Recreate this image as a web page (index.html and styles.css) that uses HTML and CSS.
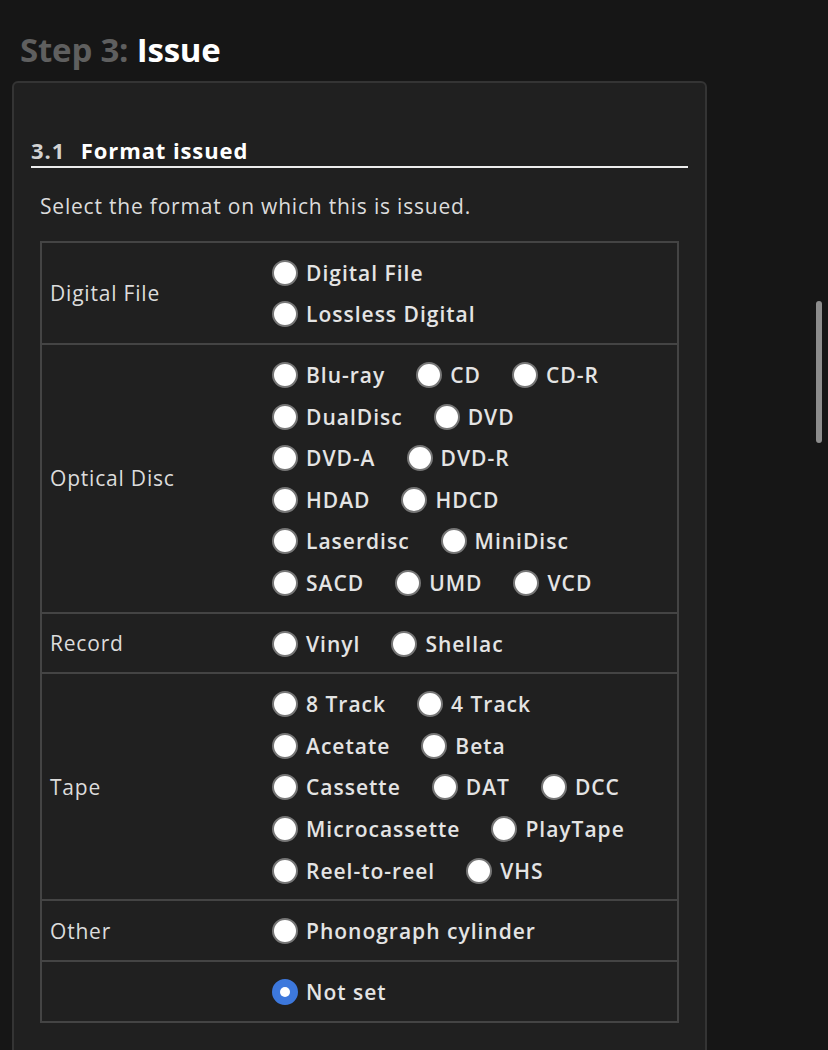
FILE: index.html
```html
<!DOCTYPE html>
<html lang="en">
<head>
<meta charset="utf-8">
<title>Step 3: Issue</title>
<link rel="stylesheet" href="styles.css">
</head>
<body>
<div class="page">
  <h1 class="step-title"><span class="step-num">Step 3:</span> Issue</h1>
  <div class="panel">
    <h2 class="section-title"><span class="section-num">3.1</span> Format issued</h2>
    <p class="hint">Select the format on which this is issued.</p>
    <div class="format-table">
      <div class="row">
        <div class="label">Digital File</div>
        <div class="options">
          <div class="line"><label class="opt"><span class="radio"></span>Digital File</label></div>
          <div class="line"><label class="opt"><span class="radio"></span>Lossless Digital</label></div>
        </div>
      </div>
      <div class="row">
        <div class="label">Optical Disc</div>
        <div class="options">
          <div class="line"><label class="opt"><span class="radio"></span>Blu-ray</label><label class="opt"><span class="radio"></span>CD</label><label class="opt"><span class="radio"></span>CD-R</label></div>
          <div class="line"><label class="opt"><span class="radio"></span>DualDisc</label><label class="opt"><span class="radio"></span>DVD</label></div>
          <div class="line"><label class="opt"><span class="radio"></span>DVD-A</label><label class="opt"><span class="radio"></span>DVD-R</label></div>
          <div class="line"><label class="opt"><span class="radio"></span>HDAD</label><label class="opt"><span class="radio"></span>HDCD</label></div>
          <div class="line"><label class="opt"><span class="radio"></span>Laserdisc</label><label class="opt"><span class="radio"></span>MiniDisc</label></div>
          <div class="line"><label class="opt"><span class="radio"></span>SACD</label><label class="opt"><span class="radio"></span>UMD</label><label class="opt"><span class="radio"></span>VCD</label></div>
        </div>
      </div>
      <div class="row">
        <div class="label">Record</div>
        <div class="options">
          <div class="line"><label class="opt"><span class="radio"></span>Vinyl</label><label class="opt"><span class="radio"></span>Shellac</label></div>
        </div>
      </div>
      <div class="row">
        <div class="label">Tape</div>
        <div class="options">
          <div class="line"><label class="opt"><span class="radio"></span>8 Track</label><label class="opt"><span class="radio"></span>4 Track</label></div>
          <div class="line"><label class="opt"><span class="radio"></span>Acetate</label><label class="opt"><span class="radio"></span>Beta</label></div>
          <div class="line"><label class="opt"><span class="radio"></span>Cassette</label><label class="opt"><span class="radio"></span>DAT</label><label class="opt"><span class="radio"></span>DCC</label></div>
          <div class="line"><label class="opt"><span class="radio"></span>Microcassette</label><label class="opt"><span class="radio"></span>PlayTape</label></div>
          <div class="line"><label class="opt"><span class="radio"></span>Reel-to-reel</label><label class="opt"><span class="radio"></span>VHS</label></div>
        </div>
      </div>
      <div class="row">
        <div class="label">Other</div>
        <div class="options">
          <div class="line"><label class="opt"><span class="radio"></span>Phonograph cylinder</label></div>
        </div>
      </div>
      <div class="row">
        <div class="label"></div>
        <div class="options">
          <div class="line"><label class="opt"><span class="radio checked"></span>Not set</label></div>
        </div>
      </div>
    </div>
  </div>
</div>
<div class="scrollbar"></div>
</body>
</html>
```
FILE: styles.css
```css
html, body {
  margin: 0;
  padding: 0;
  background: #161616;
  height: 100%;
  overflow: hidden;
}
body {
  font-family: "Open Sans", "Noto Sans", sans-serif;
  color: #e6e6e6;
}
.page {
  padding: 0 0 0 12px;
}
.step-title {
  margin: 0;
  padding: 30px 0 11px 8px;
  line-height: 40px;
  font-size: 33px;
  font-weight: 700;
  color: #ffffff;
  letter-spacing: -0.2px;
}
.step-title .step-num {
  color: #5f5f5f;
}
.panel {
  width: 695px;
  min-height: 1100px;
  box-sizing: border-box;
  background: #202020;
  border: 2px solid #343434;
  border-radius: 6px;
  padding: 54px 17px 0 17px;
}
.section-title {
  margin: 0;
  font-size: 22px;
  line-height: 27px;
  font-weight: 700;
  color: #ffffff;
  letter-spacing: 0.9px;
  padding-bottom: 2px;
  border-bottom: 2px solid #ececec;
}
.section-num {
  color: #d2d2d2;
  margin-right: 9px;
}
.hint {
  margin: 26px 0 0 9px;
  font-size: 21px;
  line-height: 24px;
  letter-spacing: 0.8px;
  color: #dcdcdc;
}
.format-table {
  margin: 23px 9px 0 9px;
  border: 2px solid #444444;
}
.row {
  display: flex;
  align-items: center;
  border-top: 2px solid #444444;
}
.row:first-child {
  border-top: none;
}
.label {
  width: 222px;
  padding-left: 8px;
  font-size: 21px;
  letter-spacing: 0.8px;
  color: #dcdcdc;
  flex: none;
}
.options {
  padding: 9px 0 8px 0;
  flex: 1;
}
.line {
  display: flex;
  align-items: center;
  height: 41.6px;
  gap: 31px;
}
.opt {
  display: flex;
  align-items: center;
  gap: 8px;
  font-size: 21px;
  font-weight: 600;
  letter-spacing: 1px;
  color: #e4e4e4;
}
.radio {
  width: 26px;
  height: 26px;
  box-sizing: border-box;
  border-radius: 50%;
  background: #ffffff;
  border: 2px solid #767676;
  flex: none;
}
.radio.checked {
  background: #3d78dc;
  border: 2px solid #3d78dc;
  display: flex;
  align-items: center;
  justify-content: center;
}
.radio.checked::after {
  content: "";
  width: 10px;
  height: 10px;
  border-radius: 50%;
  background: #ffffff;
}
.scrollbar {
  position: fixed;
  left: 816px;
  top: 301px;
  width: 6px;
  height: 142px;
  border-radius: 3px;
  background: #8c8c8c;
}
```
